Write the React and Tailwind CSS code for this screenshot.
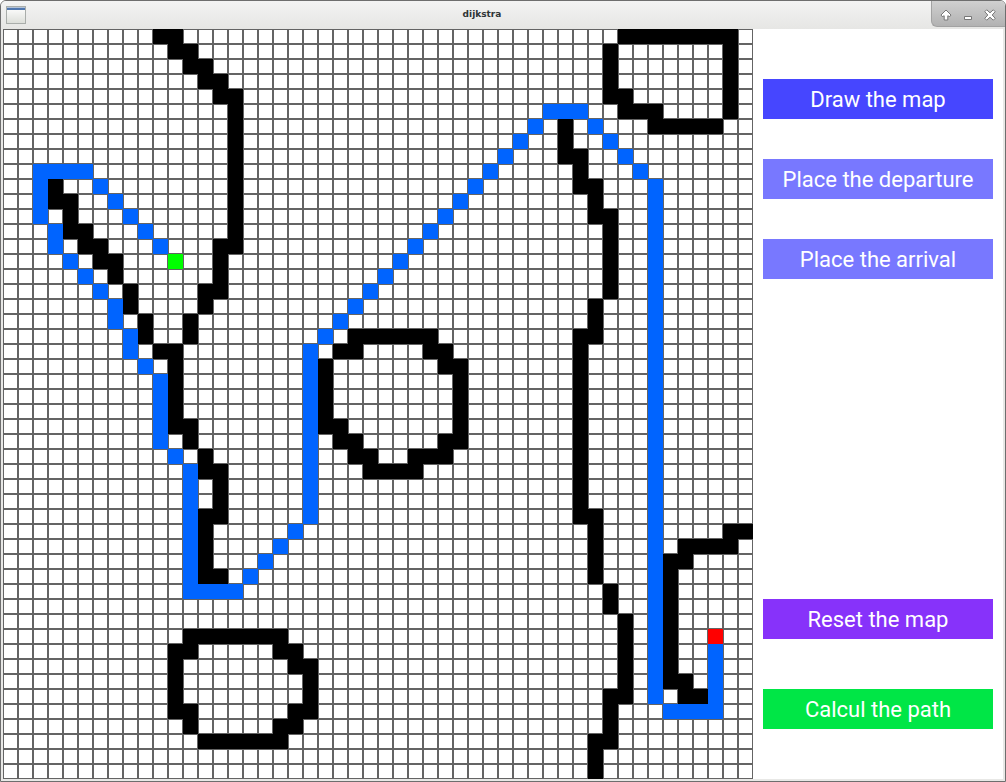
import React from "react";

const CELL = 15;
const SIZE = 50;

// Each run is [column, row, columns, rows].
const WALLS = [
  // upper left line
  [10, 0, 2, 1], [11, 1, 2, 1], [12, 2, 2, 1], [13, 3, 2, 1], [14, 4, 1, 1],
  [15, 4, 1, 11], [14, 14, 1, 4], [13, 17, 1, 2], [12, 19, 1, 2],
  // diagonal going down to the lower left hook
  [3, 10, 1, 2], [4, 11, 1, 3], [5, 13, 1, 2], [6, 14, 1, 2], [7, 15, 1, 2],
  [8, 17, 1, 2], [9, 19, 1, 2], [10, 21, 1, 1], [11, 21, 1, 6], [12, 26, 1, 2],
  [13, 28, 1, 2], [14, 29, 1, 4], [13, 32, 1, 5], [14, 36, 1, 1],
  // middle ring
  [23, 20, 6, 1], [22, 21, 2, 1], [28, 21, 2, 1], [21, 22, 1, 5], [29, 22, 1, 1],
  [30, 22, 1, 6], [22, 26, 1, 1], [22, 27, 2, 1], [29, 27, 1, 1], [23, 28, 2, 1],
  [27, 28, 3, 1], [24, 29, 4, 1],
  // bottom ring
  [12, 40, 7, 1], [11, 41, 2, 1], [18, 41, 2, 1], [11, 42, 1, 4], [19, 42, 1, 1],
  [20, 42, 1, 4], [12, 45, 1, 2], [19, 45, 1, 1], [18, 46, 2, 1], [13, 47, 6, 1],
  // top right shape
  [41, 0, 8, 1], [48, 1, 1, 5], [40, 1, 1, 4], [41, 4, 1, 2], [42, 5, 2, 1],
  [43, 6, 5, 1],
  // long vertical line
  [37, 6, 1, 3], [38, 8, 1, 3], [39, 10, 1, 3], [40, 12, 1, 6], [39, 18, 1, 3],
  [38, 20, 1, 13], [39, 32, 1, 5], [40, 37, 1, 2], [41, 39, 1, 6], [40, 44, 1, 4],
  [39, 47, 1, 3],
  // right hook
  [48, 33, 2, 1], [45, 34, 4, 1], [44, 35, 2, 1], [44, 36, 1, 8], [45, 43, 1, 2],
  [46, 44, 1, 1],
];

const PATH = [
  [6, 10, 1, 1], [7, 11, 1, 1], [8, 12, 1, 1], [9, 13, 1, 1], [10, 14, 1, 1],
  [2, 9, 4, 1], [2, 10, 1, 3], [3, 13, 1, 2], [4, 15, 1, 1], [5, 16, 1, 1],
  [6, 17, 1, 1], [7, 18, 1, 2], [8, 20, 1, 2], [9, 22, 1, 1], [10, 23, 1, 5],
  [11, 28, 1, 1], [12, 29, 1, 8], [12, 37, 4, 1], [16, 36, 1, 1], [17, 35, 1, 1],
  [18, 34, 1, 1], [19, 33, 1, 1], [20, 21, 1, 12],
  ...Array.from({ length: 15 }, (_, i) => [21 + i, 20 - i, 1, 1]),
  [36, 5, 3, 1], [39, 6, 1, 1], [40, 7, 1, 1], [41, 8, 1, 1], [42, 9, 1, 1],
  [43, 10, 1, 35], [44, 45, 4, 1], [47, 41, 1, 4],
];

const DEPARTURE = [[11, 15, 1, 1]];
const ARRIVAL = [[47, 40, 1, 1]];

function Runs({ runs, className }) {
  return (
    <g className={className}>
      {runs.map(([x, y, w, h]) => (
        <rect key={`${x}-${y}`} x={x * CELL} y={y * CELL} width={w * CELL} height={h * CELL} />
      ))}
    </g>
  );
}

function GridMap() {
  const side = CELL * SIZE;
  return (
    <svg
      width={side}
      height={side}
      viewBox={`0 0 ${side} ${side}`}
      shapeRendering="crispEdges"
      role="img"
      aria-label="Map"
      className="block shrink-0"
    >
      <defs>
        <pattern id="cell" width={CELL} height={CELL} patternUnits="userSpaceOnUse">
          <rect width={CELL} height={CELL} fill="#646464" />
          <rect x="1" y="1" width={CELL - 2} height={CELL - 2} fill="#ffffff" />
        </pattern>
      </defs>
      <rect width={side} height={side} fill="url(#cell)" />
      <Runs runs={WALLS} className="fill-black" />
      <Runs runs={PATH} className="fill-[#0064ff]" />
      <Runs runs={DEPARTURE} className="fill-[#00ff00]" />
      <Runs runs={ARRIVAL} className="fill-[#ff0000]" />
    </svg>
  );
}

function WindowIcon() {
  return (
    <svg width="20" height="18" viewBox="0 0 20 18" shapeRendering="crispEdges" aria-hidden="true">
      <defs>
        <linearGradient id="pane" x1="0" y1="0" x2="0" y2="1">
          <stop offset="0" stopColor="#ffffff" />
          <stop offset="1" stopColor="#dddfda" />
        </linearGradient>
      </defs>
      <rect width="20" height="18" fill="#a9adaa" />
      <rect x="1" y="1" width="18" height="16" fill="url(#pane)" />
      <rect x="1" y="1" width="18" height="1" fill="#b4c3d8" />
      <rect x="1" y="2" width="18" height="2" fill="#5178b0" />
    </svg>
  );
}

function TitleButton({ label, children }) {
  return (
    <button type="button" aria-label={label} className="flex h-4 w-4 items-center justify-center">
      <svg width="12" height="12" viewBox="0 0 12 12" strokeLinejoin="round" aria-hidden="true">
        {children}
      </svg>
    </button>
  );
}

function TitleBar() {
  return (
    <header className="flex h-7 items-stretch bg-linear-to-b from-[#f3f3f3] to-[#e6e6e4]">
      <div className="flex w-8 shrink-0 items-center pl-[5px]">
        <WindowIcon />
      </div>
      <h1 className="flex flex-1 items-center justify-center font-['DejaVu_Sans',sans-serif] text-[9px] font-bold text-[#2e3436]">
        dijkstra
      </h1>
      <div className="mb-[2px] flex w-[74px] shrink-0 items-center justify-between rounded-bl-md border-b border-l border-[#a2a2a2] bg-linear-to-b from-[#d0d0d0] to-[#b2b2b2] pt-[2px] pl-[6px] pr-[7px]">
        <TitleButton label="Shade">
          <path d="M6 1 L11 6 L9.8 7.6 L7.8 6.8 V11 H4.2 V6.8 L2.2 7.6 L1 6 Z" fill="#fff" stroke="#777" />
        </TitleButton>
        <TitleButton label="Minimize">
          <rect x="2.5" y="7.5" width="7" height="3" fill="#fff" stroke="#777" />
        </TitleButton>
        <TitleButton label="Close">
          <path
            d="M2.7 0.8 L6 3.8 L9.3 0.8 L11.2 2.7 L8.2 6 L11.2 9.3 L9.3 11.2 L6 8.2 L2.7 11.2 L0.8 9.3 L3.8 6 L0.8 2.7 Z"
            fill="#fff"
            stroke="#777"
          />
        </TitleButton>
      </div>
    </header>
  );
}

function PanelButton({ color, children }) {
  return (
    <button
      type="button"
      className={`flex h-10 w-full items-center justify-center pt-[2px] font-[Roboto,sans-serif] text-[22px] leading-7 whitespace-nowrap text-white ${color}`}
    >
      {children}
    </button>
  );
}

export default function App() {
  return (
    <div className="flex min-h-screen flex-col overflow-hidden rounded-t-md border border-[#6e6e6e] bg-[#e8e8e6]">
      <TitleBar />
      <main className="mx-[2px] mb-[2px] flex flex-1 bg-white">
        <GridMap />
        <aside className="flex flex-1 flex-col justify-between px-[10px] py-[50px]">
          <div className="flex flex-col gap-10">
            <PanelButton color="bg-[#4646ff]">Draw the map</PanelButton>
            <PanelButton color="bg-[#7878ff]">Place the departure</PanelButton>
            <PanelButton color="bg-[#7878ff]">Place the arrival</PanelButton>
          </div>
          <div className="flex flex-col gap-[50px]">
            <PanelButton color="bg-[#8732fa]">Reset the map</PanelButton>
            <PanelButton color="bg-[#00e646]">Calcul the path</PanelButton>
          </div>
        </aside>
      </main>
    </div>
  );
}
